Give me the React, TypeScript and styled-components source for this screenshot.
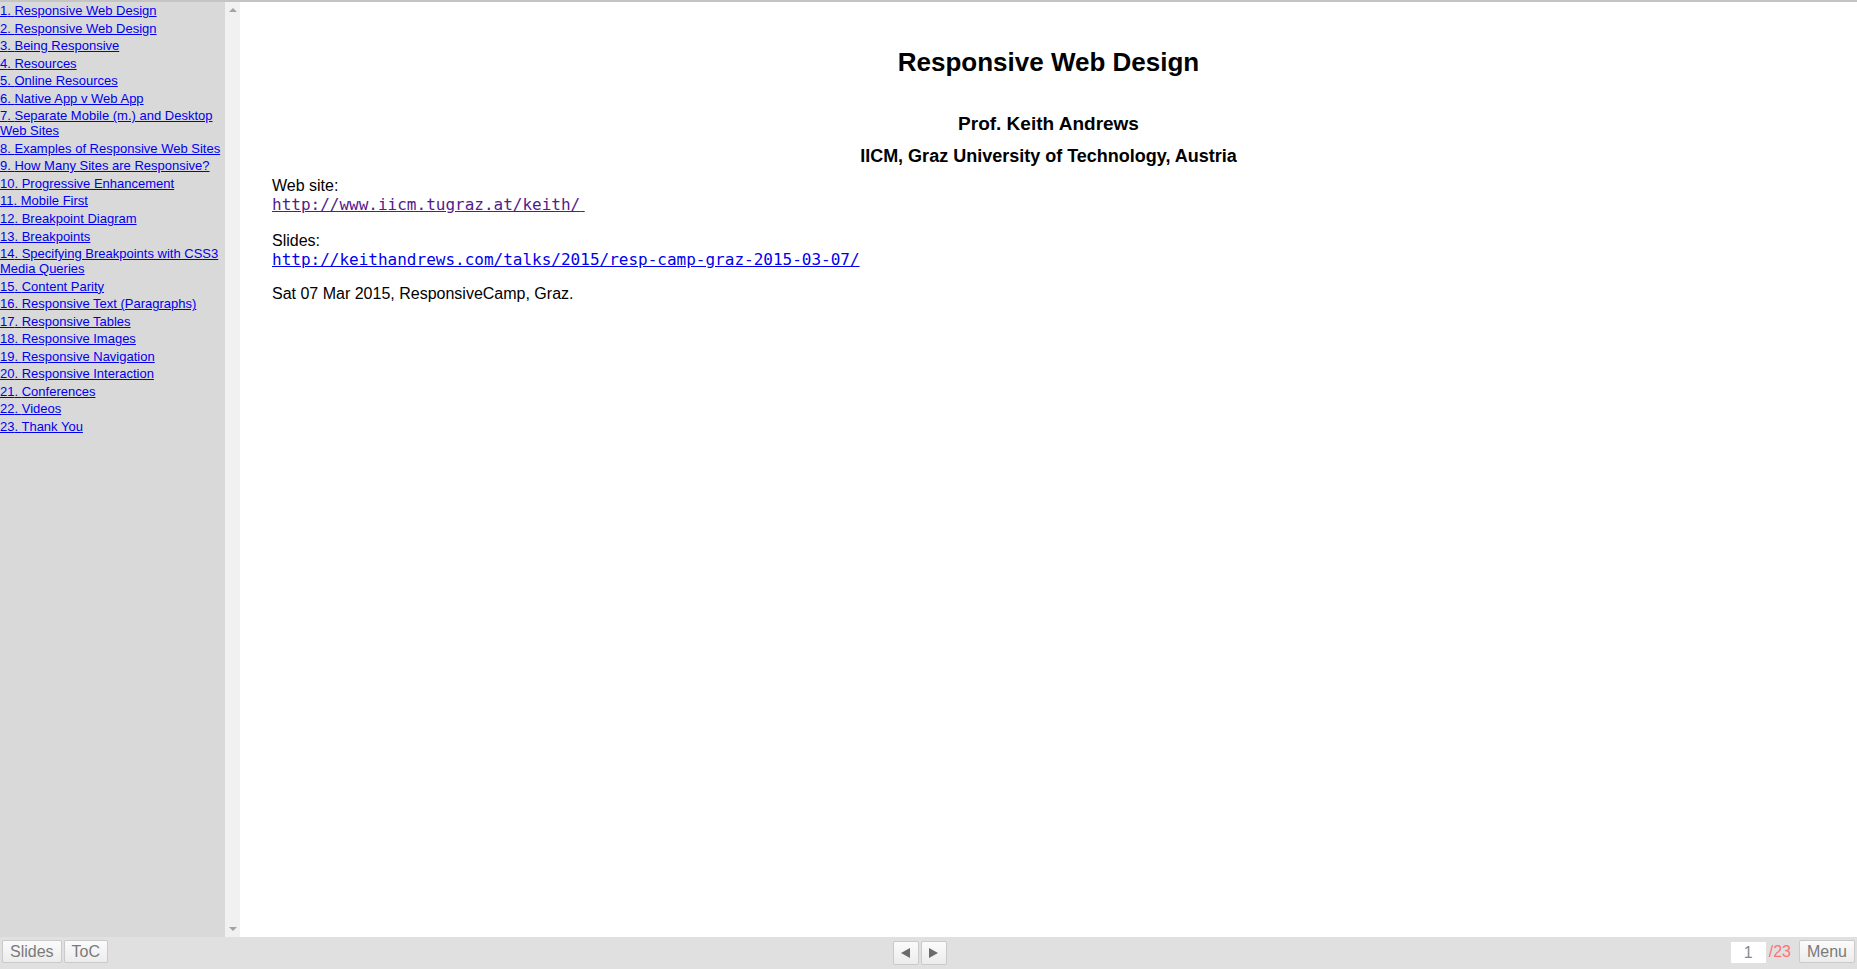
import styled, { createGlobalStyle } from "styled-components"

/* ================================
   Slide deck — title slide with ToC sidebar
   ================================ */

const colors = {
    frame: "#c4c4c4",
    sidebar: "#d9d9d9",
    track: "#f1f1f1",
    arrow: "#a3a3a3",
    bar: "#e0e0e0",
    link: "#0000ee",
    visited: "#551a8b",
    muted: "#7a7a7a",
    total: "#ff7373",
}

const sans = `"Liberation Sans", Arial, sans-serif`
const mono = `"DejaVu Sans Mono", "Liberation Mono", monospace`

/* ================================
   Data — table of contents
   ================================ */

const SLIDES = [
    "Responsive Web Design",
    "Responsive Web Design",
    "Being Responsive",
    "Resources",
    "Online Resources",
    "Native App v Web App",
    "Separate Mobile (m.) and Desktop Web Sites",
    "Examples of Responsive Web Sites",
    "How Many Sites are Responsive?",
    "Progressive Enhancement",
    "Mobile First",
    "Breakpoint Diagram",
    "Breakpoints",
    "Specifying Breakpoints with CSS3 Media Queries",
    "Content Parity",
    "Responsive Text (Paragraphs)",
    "Responsive Tables",
    "Responsive Images",
    "Responsive Navigation",
    "Responsive Interaction",
    "Conferences",
    "Videos",
    "Thank You",
]

/* ================================
   Global
   ================================ */

const GlobalStyle = createGlobalStyle`
    html, body {
        margin: 0;
        height: 100%;
        overflow: hidden;
        background: #fff;
    }
    #root {
        height: 100%;
    }
`

/* ================================
   Styled Components
   ================================ */

const Page = styled.div`
    height: 100%;
    display: flex;
    flex-direction: column;
    border-top: 2px solid ${colors.frame};
    box-sizing: border-box;
    font-family: ${sans};
`

const Body = styled.div`
    flex: 1;
    display: flex;
    min-height: 0;
`

/* Sidebar ToC */
const Sidebar = styled.nav`
    width: 225px;
    flex-shrink: 0;
    background: ${colors.sidebar};
    padding-top: 1px;
    box-sizing: border-box;
    overflow: hidden;
`

const TocLink = styled.a`
    display: block;
    font-size: 13px;
    line-height: 15px;
    margin-bottom: 2.56px;
    color: ${colors.link};
    text-decoration: underline;
    cursor: pointer;
`

/* Fake scrollbar track */
const Track = styled.div`
    width: 15px;
    flex-shrink: 0;
    background: ${colors.track};
    display: flex;
    flex-direction: column;
    justify-content: space-between;
    align-items: center;
    padding: 6px 0 6px;
    box-sizing: border-box;
`

const Arrow = styled.span<{ $dir: "up" | "down" }>`
    width: 0;
    height: 0;
    border-left: 4px solid transparent;
    border-right: 4px solid transparent;
    ${(p) =>
        p.$dir === "up"
            ? `border-bottom: 4px solid ${colors.arrow};`
            : `border-top: 4px solid ${colors.arrow};`}
`

/* Slide area */
const Slide = styled.main`
    flex: 1;
    padding: 0 32px;
    color: #000;
`

const Title = styled.h1`
    margin: 45px 0 0;
    font-size: 26px;
    line-height: 30px;
    font-weight: bold;
    text-align: center;
`

const Subtitle = styled.h3<{ $gap: number; $size: number }>`
    margin: ${(p) => p.$gap}px 0 0;
    font-size: ${(p) => p.$size}px;
    line-height: 22px;
    font-weight: bold;
    text-align: center;
`

const Para = styled.p<{ $gap: number }>`
    margin: ${(p) => p.$gap}px 0 0;
    font-size: 16px;
    line-height: 19px;
`

const UrlLink = styled.a<{ $visited?: boolean }>`
    color: ${(p) => (p.$visited ? colors.visited : colors.link)};
    text-decoration: underline;
`

const Code = styled.code`
    font-family: ${mono};
    font-size: 16px;
`

/* Bottom bar */
const BottomBar = styled.footer`
    height: 32px;
    flex-shrink: 0;
    background: ${colors.bar};
    display: grid;
    grid-template-columns: 1fr auto 1fr;
    align-items: start;
    padding: 3px 2px 0 2px;
    box-sizing: border-box;
`

const Group = styled.div<{ $align: "start" | "end" }>`
    display: flex;
    gap: 2px;
    align-items: center;
    justify-content: flex-${(p) => p.$align};
`

const Button = styled.button`
    height: 23px;
    padding: 0 7px;
    margin: 0;
    font-family: ${sans};
    font-size: 16px;
    line-height: 21px;
    color: ${colors.muted};
    background: linear-gradient(#fbfbfb, #ececec);
    border: 1px solid #cacaca;
    border-radius: 2px;
    cursor: pointer;
`

const NavGroup = styled.div`
    display: flex;
    gap: 2px;
    margin-right: 18px;
    padding-top: 1px;
`

const NavButton = styled(Button)`
    width: 26px;
    height: 24px;
    padding: 0;
    display: flex;
    align-items: center;
    justify-content: center;
`

const Tri = styled.span<{ $dir: "left" | "right" }>`
    width: 0;
    height: 0;
    border-top: 5.5px solid transparent;
    border-bottom: 5.5px solid transparent;
    ${(p) =>
        p.$dir === "left"
            ? `border-right: 9px solid #6b6b6b;`
            : `border-left: 9px solid #6b6b6b;`}
`

const PageInput = styled.input`
    width: 35px;
    height: 21px;
    margin: 2px 1px 0 0;
    padding: 0;
    border: none;
    background: #fff;
    font-family: ${sans};
    font-size: 16px;
    color: #8a8a8a;
    text-align: center;
    outline: none;
`

const Total = styled.span`
    font-size: 16px;
    color: ${colors.total};
    margin-right: 6px;
`

/* ================================
   Component
   ================================ */

export default function App() {
    return (
        <>
            <GlobalStyle />
            <Page>
                <Body>
                    <Sidebar>
                        {SLIDES.map((title, i) => (
                            <TocLink key={i}>
                                {i + 1}. {title}
                            </TocLink>
                        ))}
                    </Sidebar>
                    <Track>
                        <Arrow $dir="up" />
                        <Arrow $dir="down" />
                    </Track>

                    <Slide>
                        <Title>Responsive Web Design</Title>
                        <Subtitle $gap={36} $size={19}>Prof. Keith Andrews</Subtitle>
                        <Subtitle $gap={10} $size={18}>IICM, Graz University of Technology, Austria</Subtitle>

                        <Para $gap={9}>
                            Web site:
                            <br />
                            <UrlLink $visited>
                                <Code>http://www.iicm.tugraz.at/keith/</Code>
                                {"\u00a0"}
                            </UrlLink>
                        </Para>
                        <Para $gap={17}>
                            Slides:
                            <br />
                            <UrlLink>
                                <Code>http://keithandrews.com/talks/2015/resp-camp-graz-2015-03-07/</Code>
                            </UrlLink>
                        </Para>
                        <Para $gap={15}>Sat 07 Mar 2015, ResponsiveCamp, Graz.</Para>
                    </Slide>
                </Body>

                <BottomBar>
                    <Group $align="start">
                        <Button>Slides</Button>
                        <Button>ToC</Button>
                    </Group>
                    <NavGroup>
                        <NavButton aria-label="previous">
                            <Tri $dir="left" />
                        </NavButton>
                        <NavButton aria-label="next">
                            <Tri $dir="right" />
                        </NavButton>
                    </NavGroup>
                    <Group $align="end">
                        <PageInput defaultValue="1" />
                        <Total>/23</Total>
                        <Button>Menu</Button>
                    </Group>
                </BottomBar>
            </Page>
        </>
    )
}
